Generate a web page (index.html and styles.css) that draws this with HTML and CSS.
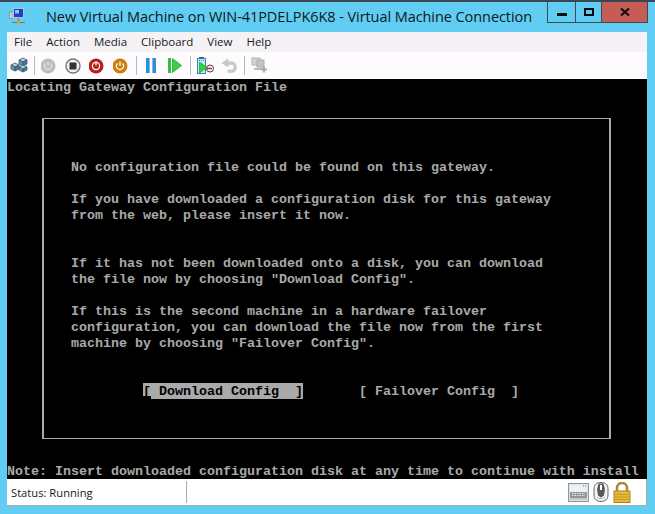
FILE: index.html
```html
<!DOCTYPE html>
<html lang="en">
<head>
<meta charset="utf-8">
<title>New Virtual Machine on WIN-41PDELPK6K8 - Virtual Machine Connection</title>
<link rel="stylesheet" href="styles.css">
</head>
<body>
<div class="window">
  <header class="titlebar">
    <svg class="app-icon" width="16" height="17" viewBox="0 0 16 17">
      <rect x="0.500" y="4" width="3.500" height="6.500" fill="#c9ced2" stroke="#7d8489" stroke-width=".6"/>
      <rect x="4.500" y="0.500" width="10" height="9" fill="#1d3fc0" stroke="#c9d3dc" stroke-width=".8"/>
      <rect x="6" y="2" width="4" height="3.500" fill="#8fc2f7"/>
      <path d="M9.500 10v3" stroke="#7d8489" stroke-width="1.600"/>
      <path d="M3 14.500h13" stroke="#6f7d5a" stroke-width="1"/>
      <rect x="8" y="13" width="3" height="3" fill="#e0a22a"/>
    </svg>
    <h1 class="title">New Virtual Machine on WIN-41PDELPK6K8 - Virtual Machine Connection</h1>
    <div class="controls">
      <div class="ctl ctl-min"><span class="min-glyph"></span></div>
      <div class="ctl ctl-max"><span class="max-glyph"></span></div>
      <div class="ctl ctl-close">
        <svg width="10" height="8" viewBox="0 0 10 8"><path d="M1 0.500l8 7M9 0.500l-8 7" stroke="#111" stroke-width="2.200"/></svg>
      </div>
    </div>
  </header>

  <div class="client">
    <nav class="menubar">
      <span class="menu-item">File</span>
      <span class="menu-item">Action</span>
      <span class="menu-item">Media</span>
      <span class="menu-item">Clipboard</span>
      <span class="menu-item">View</span>
      <span class="menu-item">Help</span>
    </nav>

    <div class="toolbar">
      <div class="tool">
        <svg width="18" height="18" viewBox="0 0 18 18">
          <path d="M1 8l4-2 4 2-4 2z" fill="#a9cfe2" stroke="#35586c" stroke-width=".8"/>
          <path d="M1 8v4l4 2v-4z" fill="#6b93a8" stroke="#35586c" stroke-width=".8"/>
          <path d="M5 10v4l4-2V8z" fill="#4d7488" stroke="#35586c" stroke-width=".8"/>
          <path d="M9 3l4-2 4 2-4 2z" fill="#a9cfe2" stroke="#35586c" stroke-width=".8"/>
          <path d="M9 3v4l4 2V5z" fill="#6b93a8" stroke="#35586c" stroke-width=".8"/>
          <path d="M13 5v4l4-2V3z" fill="#4d7488" stroke="#35586c" stroke-width=".8"/>
          <path d="M9 10l4-2 4 2-4 2z" fill="#a9cfe2" stroke="#35586c" stroke-width=".8"/>
          <path d="M9 10v3l4 2v-3z" fill="#6b93a8" stroke="#35586c" stroke-width=".8"/>
          <path d="M13 12v3l4-2v-3z" fill="#4d7488" stroke="#35586c" stroke-width=".8"/>
        </svg>
      </div>
      <span class="sep"></span>
      <div class="tool">
        <svg width="16" height="16" viewBox="0 0 16 16">
          <circle cx="7" cy="8" r="7.500" fill="#bcbcbc"/>
          <path d="M4.500 5.500a3.500 3.500 0 1 0 5 0M7 3.500v4.500" fill="none" stroke="#e6e6e6" stroke-width="1.200"/>
        </svg>
      </div>
      <div class="tool">
        <svg width="16" height="16" viewBox="0 0 16 16">
          <circle cx="8" cy="8" r="7" fill="#f4f4f4" stroke="#777" stroke-width="1.400"/>
          <rect x="4.500" y="4.500" width="7" height="7" fill="#333"/>
        </svg>
      </div>
      <div class="tool">
        <svg width="16" height="16" viewBox="0 0 16 16">
          <circle cx="7" cy="8" r="7.500" fill="#b8201c"/>
          <circle cx="7" cy="8" r="3.600" fill="none" stroke="#fff" stroke-width="1.200"/>
          <path d="M7 3.500v4" stroke="#fff" stroke-width="1.200"/>
        </svg>
      </div>
      <div class="tool">
        <svg width="16" height="16" viewBox="0 0 16 16">
          <circle cx="7" cy="8" r="7.500" fill="#cf7f0c"/>
          <path d="M4.500 5.500a3.500 3.500 0 1 0 5 0M7 3.500v4.500" fill="none" stroke="#fff" stroke-width="1.200"/>
        </svg>
      </div>
      <span class="sep"></span>
      <div class="tool">
        <svg width="12" height="15" viewBox="0 0 12 15">
          <rect x="1" y="0" width="3.600" height="15" fill="#2a8fd6"/>
          <rect x="7.400" y="0" width="3.600" height="15" fill="#2a8fd6"/>
        </svg>
      </div>
      <div class="tool">
        <svg width="14" height="15" viewBox="0 0 14 15">
          <rect x="0" y="0" width="3" height="15" fill="#2fc13a"/>
          <path d="M4.500 0.500L13.500 7.500L4.500 14.500z" fill="#39cf43" stroke="#1f9a2a" stroke-width=".7"/>
        </svg>
      </div>
      <span class="sep"></span>
      <div class="tool">
        <svg width="17" height="17" viewBox="0 0 17 17">
          <rect x="0.500" y="1.500" width="8" height="15" fill="#cfe9f5" stroke="#2a8ab2"/>
          <path d="M2 3.500h5" stroke="#2a8ab2" stroke-dasharray="1 1"/>
          <rect x="2" y="0" width="5" height="2" fill="#2a6f96"/>
          <path d="M2.500 5l7.500 5.500-7.500 5.500z" fill="#39cf43" stroke="#1f9a2a" stroke-width=".7"/>
          <circle cx="13" cy="11.500" r="3.500" fill="#f4f4f4" stroke="#444"/>
          <path d="M10 11.500h5" stroke="#c3261f" stroke-width="1.400"/>
        </svg>
      </div>
      <div class="tool">
        <svg width="16" height="15" viewBox="0 0 16 15">
          <path d="M7 1L1 5l6 4V6.500h3.500c2 0 2.500 1.500 2.500 2.500s-.8 3-3 3H7v2.500h3.500c3.500 0 5-2.600 5-5.500S13.500 3.800 10.500 3.800H7z" fill="#c9c9c9" stroke="#bdbdbd" stroke-width=".5"/>
        </svg>
      </div>
      <span class="sep"></span>
      <div class="tool">
        <svg width="17" height="17" viewBox="0 0 17 17">
          <rect x="1" y="1" width="8" height="7" fill="#d2d2d2" stroke="#b5b5b5"/>
          <rect x="6" y="3" width="7" height="7" fill="#c4c4c4" stroke="#adadad"/>
          <path d="M3 12h9" stroke="#bbb" stroke-width="2"/>
          <path d="M13 9.500v6M10 12.500h6" stroke="#a9a9a9" stroke-width="2"/>
        </svg>
      </div>
    </div>

    <main class="console">
<pre class="line">Locating Gateway Configuration File</pre>
      <section class="dialog">
<pre class="dialog-text">No configuration file could be found on this gateway.

If you have downloaded a configuration disk for this gateway
from the web, please insert it now.


If it has not been downloaded onto a disk, you can download
the file now by choosing "Download Config".

If this is the second machine in a hardware failover
configuration, you can download the file now from the first
machine by choosing "Failover Config".</pre>
        <div class="actions">
          <pre class="action action-active">[ Download Config  ]</pre>
          <pre class="action">[ Failover Config  ]</pre>
        </div>
      </section>
<pre class="line note">Note: Insert downloaded configuration disk at any time to continue with install</pre>
    </main>

    <footer class="statusbar">
      <span class="status-text">Status: Running</span>
      <span class="status-sep"></span>
      <div class="status-icons">
        <svg width="21" height="19" viewBox="0 0 21 19">
          <rect x="0.500" y="0.500" width="20" height="18" fill="#dfe3e6" stroke="#8f969b"/>
          <rect x="2" y="2" width="17" height="7" fill="#eef1f3"/>
          <rect x="2" y="9" width="17" height="6" fill="#8e979d"/>
          <path d="M4 10.500h13M4 12.500h13" stroke="#e9edef" stroke-dasharray="1.500 1"/>
          <rect x="2" y="15" width="17" height="2" fill="#c3c8cc"/>
          <path d="M15 3h3" stroke="#777" stroke-dasharray="1 1"/>
        </svg>
        <svg width="16" height="20" viewBox="0 0 16 20">
          <path d="M8 0.500C3 0.500 1 3 1 7v6c0 4 2.500 6.500 7 6.500S15 17 15 13V7C15 3 13 0.500 8 0.500z" fill="#f3f3f3" stroke="#666"/>
          <path d="M5.500 1.500h5l1.500 6-1 6-3 2-3-2-1-6z" fill="#5a5a5a"/>
          <rect x="7" y="3" width="2" height="5" fill="#fff"/>
          <path d="M4 15c1 2 7 2 8 0" fill="none" stroke="#b5b5b5"/>
        </svg>
        <svg width="18" height="21" viewBox="0 0 18 21">
          <path d="M4 9V6a5 5 0 0 1 10 0v3" fill="none" stroke="#a98a2c" stroke-width="2.500"/>
          <rect x="1" y="9" width="16" height="11.500" fill="#e6b93b" stroke="#a5852a"/>
          <path d="M1.500 12.500h15M1.500 15h15M1.500 17.500h15" stroke="#c99c24"/>
        </svg>
      </div>
    </footer>
  </div>
</div>
</body>
</html>
```

FILE: styles.css
```css
* {
  box-sizing: border-box;
}

html,
body {
  margin: 0;
  padding: 0;
}

pre {
  margin: 0;
  padding-top: 1px;
  font: inherit;
}

.window {
  width: 655px;
  height: 514px;
  display: flex;
  flex-direction: column;
  overflow: hidden;
  background: #62cdf2;
  border-top: 2px solid #3b4750;
}

.titlebar {
  height: 30px;
  flex: none;
  display: flex;
  align-items: flex-start;
  color: #0c1a22;
}

.app-icon {
  margin: 6px 0 0 9px;
  flex: none;
}

.title {
  margin: 4px 0 0 21px;
  font: 400 14.5px/22px "Open Sans", sans-serif;
  letter-spacing: -0.07px;
  white-space: nowrap;
  flex: 1;
}

.controls {
  display: flex;
  height: 21px;
  margin-right: 7px;
  border: 1px solid #3f4a50;
  border-top: 0;
}

.ctl {
  display: flex;
  align-items: center;
  justify-content: center;
  border-left: 1px solid #3f4a50;
}

.ctl-min {
  width: 27px;
  border-left: 0;
}

.ctl-max {
  width: 26px;
}

.ctl-close {
  width: 46px;
  background: #c75b55;
}

.min-glyph {
  width: 10px;
  height: 3px;
  margin-top: 4px;
  background: #0c0c0c;
}

.max-glyph {
  width: 10px;
  height: 8px;
  border: 2px solid #0c0c0c;
}

.client {
  flex: 1;
  margin: 0 8px 8px 7px;
  display: flex;
  flex-direction: column;
  min-height: 0;
}

.menubar {
  height: 20px;
  flex: none;
  display: flex;
  gap: 14px;
  align-items: center;
  padding-left: 7px;
  background: #f5f2f6;
  font: 11.5px/20px "Open Sans", sans-serif;
  color: #1a1a1a;
}

.toolbar {
  height: 27px;
  flex: none;
  display: flex;
  align-items: center;
  background: #fdfbfd;
}

.tool {
  width: 24px;
  height: 27px;
  display: flex;
  align-items: center;
  justify-content: center;
}

.sep {
  width: 1px;
  height: 19px;
  margin: 0 2px 0 3px;
  background: #b4b8bc;
}

.console {
  height: 400px;
  flex: none;
  display: flex;
  flex-direction: column;
  background: #000;
  color: #aaa;
  font: 700 13.333px/16px "Liberation Mono", monospace;
}

.line {
  height: 16px;
}

.dialog {
  height: 321px;
  width: 569px;
  margin: 23px 0 0 35px;
  padding: 40px 0 0 27px;
  border: 1px solid #aaa;
  border-left-width: 2px;
  border-right-width: 2px;
}

.dialog-text {
  margin-bottom: -1px;
}

.actions {
  display: flex;
  gap: 56px;
  margin: 32px 0 0 72px;
}

.action {
  position: relative;
  width: 160px;
  height: 16px;
}

.action-active {
  background: #aaa;
  color: #000;
}

.action-active::after {
  content: "";
  position: absolute;
  left: 0;
  bottom: 0;
  width: 8px;
  height: 3px;
  background: #000;
}

.note {
  margin-top: auto;
}

.statusbar {
  flex: 1;
  display: flex;
  align-items: center;
  background: #fff;
  border-bottom: 1px solid #a9a9a9;
  border-right: 1px solid #a9a9a9;
  font: 11.2px/20px "Open Sans", sans-serif;
  color: #1a1a1a;
}

.status-text {
  width: 179px;
  padding-left: 4px;
  padding-top: 1px;
}

.status-sep {
  width: 1px;
  height: 22px;
  background: #a9a9a9;
}

.status-icons {
  margin-left: auto;
  margin-right: 15px;
  display: flex;
  align-items: center;
  gap: 4px;
}
```
